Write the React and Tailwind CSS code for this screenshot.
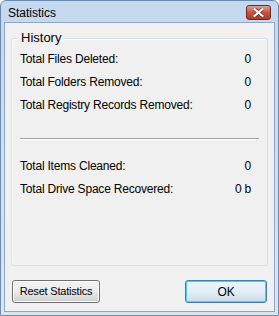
const rows1 = [
  ["Total Files Deleted:", "0"],
  ["Total Folders Removed:", "0"],
  ["Total Registry Records Removed:", "0"],
];

const rows2 = [
  ["Total Items Cleaned:", "0"],
  ["Total Drive Space Recovered:", "0 b"],
];

const Row = ({ label, value }) => (
  <div className="flex h-[23px] items-center justify-between">
    <span>{label}</span>
    <span>{value}</span>
  </div>
);

export default function App() {
  return (
    <div
      className="flex h-[316px] w-[279px] flex-col overflow-hidden rounded-t-[6px] border border-[#6d8bb0] bg-gradient-to-b from-[#c4d8ee] to-[#d9e6f4] text-[12px] tracking-[-0.2px] text-black"
      style={{ fontFamily: "'Liberation Sans', Arial, sans-serif" }}
    >
      {/* title bar */}
      <div className="flex h-[21px] shrink-0 items-center justify-between pl-[7px] pr-[7px] pt-[2px]">
        <span className="text-[12px] tracking-normal text-black">Statistics</span>
        <div className="flex h-[15px] w-[25px] items-center justify-center rounded-[3px] border border-[#6b2a22] bg-gradient-to-b from-[#e0a092] via-[#c8533e] to-[#b03a26]">
          <svg width="11" height="9" viewBox="0 0 11 9">
            <path
              d="M1.5 1 L9.5 8 M9.5 1 L1.5 8"
              stroke="#5a2018"
              strokeWidth="3.6"
              strokeLinecap="square"
            />
            <path
              d="M1.5 1 L9.5 8 M9.5 1 L1.5 8"
              stroke="#ffffff"
              strokeWidth="2.2"
              strokeLinecap="square"
            />
          </svg>
        </div>
      </div>

      {/* client area */}
      <div className="mx-[3px] mb-[3px] flex flex-1 flex-col border border-[#8ea6c4] bg-[#f0f0f0] px-[6px] pt-[15px]">
        <div className="relative h-[228px] shrink-0 rounded-[3px] border border-[#d5dfe5] px-[8px] pt-[8px] shadow-[inset_1px_1px_0_#ffffff]">
          <span className="absolute left-[6px] top-[-9px] bg-[#f0f0f0] px-[3px] text-[13px] leading-[16px] tracking-normal">
            History
          </span>
          <div className="pr-[8px]">
            {rows1.map(([l, v]) => (
              <Row key={l} label={l} value={v} />
            ))}
          </div>
          <div className="mb-[14px] mt-[22px] border-t border-b border-t-[#a0a0a0] border-b-white" />
          <div className="pr-[8px]">
            {rows2.map(([l, v]) => (
              <Row key={l} label={l} value={v} />
            ))}
          </div>
        </div>

        <div className="mx-[1px] mt-[14px] flex justify-between">
          <button className="h-[23px] w-[88px] whitespace-nowrap rounded-[3px] border border-[#707070] bg-gradient-to-b from-[#f2f2f2] via-[#ebebeb] to-[#cfcfcf] text-[11px] shadow-[inset_0_0_0_1px_#fcfcfc]">
            Reset Statistics
          </button>
          <button className="h-[23px] w-[82px] rounded-[3px] border border-[#3c7fb1] bg-gradient-to-b from-[#eaf6fd] via-[#e3eef6] to-[#c9dde9] text-[12px] shadow-[inset_0_0_0_1px_#48d0fa]">
            OK
          </button>
        </div>
      </div>
    </div>
  );
}
